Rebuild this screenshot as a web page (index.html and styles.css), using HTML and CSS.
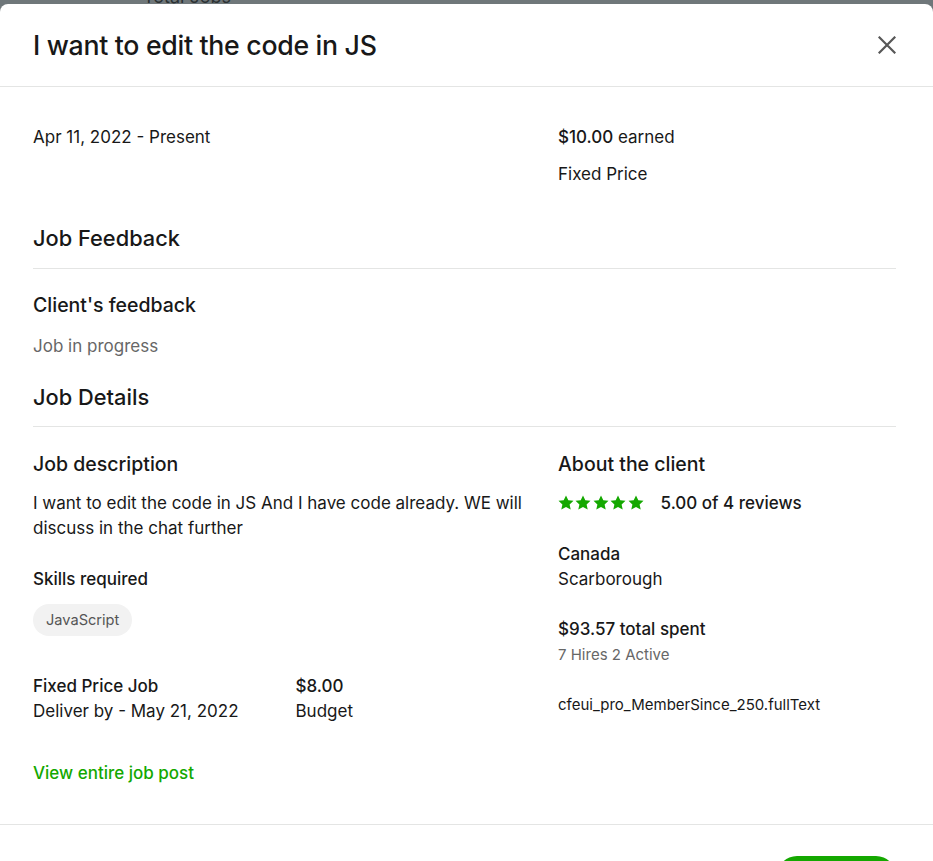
FILE: index.html
```html
<!DOCTYPE html>
<html lang="en">
<head>
<meta charset="utf-8">
<title>Job details</title>
<link rel="stylesheet" href="styles.css">
</head>
<body>
<div class="backdrop">
  <div class="backdrop-cell">Total Jobs</div>
</div>
<div class="modal">
  <header class="modal-header">
    <h2 class="modal-title">I want to edit the code in JS</h2>
    <button class="close-btn" aria-label="Close">
      <svg width="18" height="18" viewBox="0 0 18 18" fill="none" stroke="currentColor" stroke-width="2.2" stroke-linecap="square">
        <path d="M1.5 1.5 L16.5 16.5 M16.5 1.5 L1.5 16.5"/>
      </svg>
    </button>
  </header>
  <div class="modal-body">
    <div class="cols summary">
      <div class="line">Apr 11, 2022 - Present</div>
      <div class="summary-right">
        <div class="line"><span class="strong">$10.00</span> earned</div>
        <div class="line">Fixed Price</div>
      </div>
    </div>

    <h3 class="section-title">Job Feedback</h3>
    <h4 class="sub-title feedback-title">Client's feedback</h4>
    <p class="muted line">Job in progress</p>

    <h3 class="section-title details-title">Job Details</h3>
    <div class="cols details">
      <div class="left">
        <h4 class="sub-title">Job description</h4>
        <p class="desc">I want to edit the code in JS And I have code already. WE will discuss in the chat further</p>
        <div class="strong line skills-label">Skills required</div>
        <div class="chips"><span class="chip">JavaScript</span></div>
        <div class="terms">
          <div>
            <div class="strong">Fixed Price Job</div>
            <div>Deliver by - May 21, 2022</div>
          </div>
          <div>
            <div class="strong">$8.00</div>
            <div>Budget</div>
          </div>
        </div>
        <a class="link" href="#">View entire job post</a>
      </div>
      <div class="right">
        <h4 class="sub-title">About the client</h4>
        <div class="rating">
          <span class="stars">
            <svg viewBox="0 0 16 16" class="star"><path d="M8 0.4 L10.3 5.2 L15.5 5.8 L11.6 9.4 L12.7 14.6 L8 12 L3.3 14.6 L4.4 9.4 L0.5 5.8 L5.7 5.2 Z"/></svg>
            <svg viewBox="0 0 16 16" class="star"><path d="M8 0.4 L10.3 5.2 L15.5 5.8 L11.6 9.4 L12.7 14.6 L8 12 L3.3 14.6 L4.4 9.4 L0.5 5.8 L5.7 5.2 Z"/></svg>
            <svg viewBox="0 0 16 16" class="star"><path d="M8 0.4 L10.3 5.2 L15.5 5.8 L11.6 9.4 L12.7 14.6 L8 12 L3.3 14.6 L4.4 9.4 L0.5 5.8 L5.7 5.2 Z"/></svg>
            <svg viewBox="0 0 16 16" class="star"><path d="M8 0.4 L10.3 5.2 L15.5 5.8 L11.6 9.4 L12.7 14.6 L8 12 L3.3 14.6 L4.4 9.4 L0.5 5.8 L5.7 5.2 Z"/></svg>
            <svg viewBox="0 0 16 16" class="star"><path d="M8 0.4 L10.3 5.2 L15.5 5.8 L11.6 9.4 L12.7 14.6 L8 12 L3.3 14.6 L4.4 9.4 L0.5 5.8 L5.7 5.2 Z"/></svg>
          </span>
          <span class="strong">5.00 of 4 reviews</span>
        </div>
        <div class="location">
          <div class="strong">Canada</div>
          <div>Scarborough</div>
        </div>
        <div class="spent">
          <div class="strong">$93.57 total spent</div>
          <div class="small muted">7 Hires 2 Active</div>
        </div>
        <div class="small member">cfeui_pro_MemberSince_250.fullText</div>
      </div>
    </div>
  </div>
  <footer class="modal-footer">
    <button class="btn-primary">Close</button>
  </footer>
</div>
</body>
</html>
```
FILE: styles.css
```css
* { box-sizing: border-box; }

html, body {
  margin: 0;
  padding: 0;
}

body {
  width: 933px;
  height: 861px;
  overflow: hidden;
  background: #6f777a;
  font-family: "Inter", "Liberation Sans", Arial, sans-serif;
  font-size: 17px;
  line-height: 24px;
  color: #181818;
}

.backdrop {
  height: 4px;
  overflow: hidden;
  background: #6f777a;
}

.backdrop-cell {
  margin-left: 139px;
  width: 111px;
  height: 4px;
  border-left: 1px solid #5d6467;
  border-right: 1px solid #5d6467;
  padding-left: 3px;
  font-size: 18px;
  line-height: 16px;
  color: #2b3133;
}

.backdrop-cell::before {
  content: "";
  display: block;
  margin-top: -11px;
}

.modal {
  background: #ffffff;
  border-radius: 8px 8px 0 0;
  min-height: 900px;
}

.modal-header {
  height: 83px;
  padding: 0 33px;
  border-bottom: 1px solid #e4e5e4;
  display: flex;
  align-items: center;
  justify-content: space-between;
}

.modal-title {
  margin: 0;
  font-size: 26.7px;
  line-height: 32px;
  font-weight: 500;
  letter-spacing: -0.3px;
  color: #181818;
  padding-bottom: 1px;
}

.close-btn {
  border: 0;
  background: none;
  padding: 0;
  width: 18px;
  height: 18px;
  color: #575757;
  display: flex;
  margin-right: 4px;
}

.modal-body {
  padding: 38px 37px 39px 33px;
}

.cols {
  display: grid;
  grid-template-columns: 493px 1fr;
  column-gap: 32px;
}

.line { line-height: 24px; }

.strong { font-weight: 500; }

.summary-right {
  display: flex;
  flex-direction: column;
  gap: 13px;
}

.section-title {
  margin: 38px 0 0;
  padding-bottom: 16px;
  border-bottom: 1px solid #e4e5e4;
  font-size: 21.8px;
  line-height: 28px;
  font-weight: 500;
}

.details-title {
  margin-top: 25px;
  padding-bottom: 15px;
}

.sub-title {
  margin: 0;
  font-size: 19.5px;
  line-height: 28px;
  font-weight: 500;
}

.feedback-title { margin-top: 22px; }

.muted { color: #676767; }

p { margin: 0; }

.feedback-title + .muted { margin-top: 15px; }

.details { margin-top: 23px; }

.desc {
  margin-top: 12.5px;
  line-height: 25px;
}

.skills-label { margin-top: 26.5px; }

.chips {
  margin-top: 13px;
  display: flex;
}

.chip {
  display: inline-flex;
  align-items: center;
  height: 32px;
  padding: 0 13px;
  border-radius: 16px;
  background: #f2f2f2;
  color: #555555;
  font-size: 14.6px;
}

.terms {
  margin-top: 37.5px;
  display: grid;
  grid-template-columns: 1fr 1fr;
  column-gap: 32px;
  line-height: 25px;
}

.link {
  display: block;
  margin-top: 37.5px;
  color: #14a800;
  font-weight: 500;
  text-decoration: none;
  line-height: 24px;
  width: max-content;
}

.rating {
  margin-top: 12.5px;
  display: flex;
  align-items: center;
  gap: 17px;
  line-height: 25px;
}

.stars {
  display: flex;
  gap: 1.4px;
}

.star {
  width: 16px;
  height: 16px;
  fill: #14a800;
}

.location {
  margin-top: 26px;
  line-height: 25px;
}

.spent {
  margin-top: 25px;
  line-height: 25px;
}

.small {
  font-size: 15px;
  line-height: 22px;
}

.spent .small { margin-top: 2.5px; }

.member { margin-top: 28px; }

.modal-footer {
  border-top: 1px solid #e4e5e4;
  padding: 31px 37px 0 33px;
  display: flex;
  justify-content: flex-end;
}

.btn-primary {
  height: 40px;
  padding: 0 38px;
  border: 0;
  border-radius: 20px;
  background: #14a800;
  color: #ffffff;
  font-family: inherit;
  font-size: 16px;
  font-weight: 500;
}
```
